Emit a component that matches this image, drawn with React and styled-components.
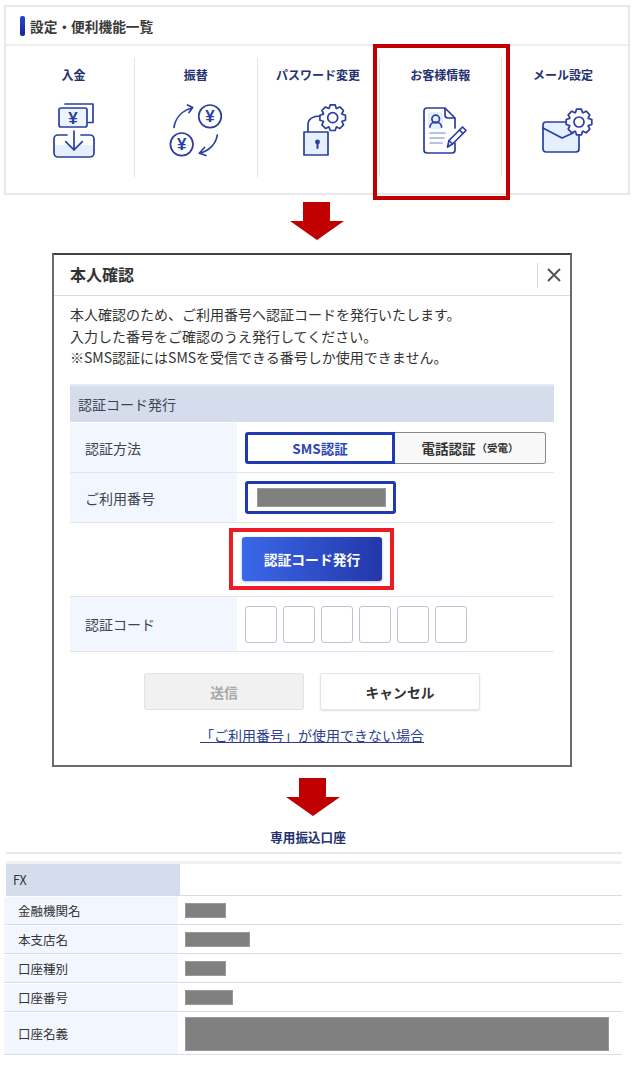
import styled, { createGlobalStyle } from "styled-components";

const NAVY = "#2a3f9f";
const LIGHT = "#e6effd";

const GlobalStyle = createGlobalStyle`
  html, body {
    margin: 0;
    padding: 0;
    background: #fff;
  }
  * {
    box-sizing: border-box;
  }
  body {
    font-family: "Noto Sans CJK JP", "Noto Sans", "Liberation Sans", sans-serif;
    color: #333;
  }
`;

const Page = styled.div`
  width: 634px;
  height: 1073px;
  overflow: hidden;
  padding-top: 5px;
  display: flex;
  flex-direction: column;
`;

const Panel = styled.section`
  width: 626px;
  margin-left: 4px;
  border: 2px solid #e8e8e8;
`;

const PanelHead = styled.div`
  height: 39px;
  display: flex;
  align-items: center;
  gap: 5px;
  padding-left: 14px;
  border-bottom: 2px solid #eeeeee;
`;

const HeadMark = styled.span`
  width: 5px;
  height: 20px;
  border-radius: 2px;
  background: linear-gradient(180deg, #2a45c8, #17269a);
`;

const HeadTitle = styled.h2`
  margin: 0;
  font-size: 13.7px;
  line-height: 18px;
  font-weight: 700;
  color: #3a3a3a;
`;

const MenuGrid = styled.div`
  display: grid;
  grid-template-columns: repeat(5, 122.25px);
  padding: 12px 0 16px 7px;
`;

const MenuItem = styled.div`
  position: relative;
  height: 119px;
  padding-top: 8px;
  display: flex;
  flex-direction: column;
  align-items: center;
  border-right: ${(p) => (p.$last ? "none" : "1px solid #e2e2e2")};

  ${(p) =>
    p.$marked &&
    `
    &::after {
      content: "";
      position: absolute;
      left: -7px;
      right: -9px;
      top: -14px;
      bottom: -23px;
      border: 4px solid #c00000;
    }
  `}
`;

const MenuLabel = styled.div`
  font-size: 12px;
  line-height: 18px;
  font-weight: 700;
  color: #25316f;
  white-space: nowrap;
`;

const MenuIcon = styled.svg`
  width: 60px;
  height: 70px;
  margin-top: 11px;
  fill: none;
  stroke: ${NAVY};
  stroke-width: 1.7;
  stroke-linecap: round;
  stroke-linejoin: round;
`;

const YenMark = styled.text`
  font-family: "Liberation Sans", sans-serif;
  font-size: 17px;
  font-weight: 700;
  fill: ${NAVY};
  stroke: none;
  text-anchor: middle;
`;

const ArrowSvg = styled.svg`
  display: block;
  flex: none;
  width: 54px;
  height: 38px;
  margin-top: ${(p) => p.$top}px;
  margin-left: ${(p) => p.$left}px;
`;

const Modal = styled.section`
  width: 520px;
  height: 514px;
  margin-top: 13px;
  margin-left: 52px;
  border: 2px solid #6a6a6a;
  border-top-color: #444;
  background: #fff;
`;

const ModalHead = styled.header`
  height: 41px;
  display: flex;
  align-items: center;
  justify-content: space-between;
  padding-left: 16px;
  border-bottom: 1px solid #dcdcdc;
`;

const ModalTitle = styled.h1`
  margin: 0;
  padding-bottom: 3px;
  font-size: 16px;
  font-weight: 700;
  color: #333;
`;

const CloseButton = styled.button`
  width: 33px;
  height: 25px;
  padding: 0;
  display: flex;
  align-items: center;
  justify-content: center;
  background: none;
  border: none;
  border-left: 1px solid #d4d4d4;
  color: #555;
`;

const ModalBody = styled.div`
  padding: 8px 16px 0;
`;

const Intro = styled.p`
  margin: 0 0 15.5px;
  font-size: 14px;
  line-height: 21.5px;
  color: #333;
  white-space: nowrap;
`;

const SectionHead = styled.div`
  height: 38px;
  margin-bottom: 1px;
  padding-left: 8px;
  display: flex;
  align-items: center;
  font-size: 14px;
  color: #3d4350;
  background: #d5ddec;
  border-top: 2px solid #e6ebf3;
`;

const FormRow = styled.div`
  display: grid;
  grid-template-columns: 167px 1fr;
  height: ${(p) => p.$h}px;
  border-bottom: 1px solid #dfe6f2;
`;

const FormLabel = styled.div`
  display: flex;
  align-items: center;
  padding-left: 15px;
  font-size: 14px;
  color: #3d4350;
  background: #f2f6fe;
`;

const FormValue = styled.div`
  display: flex;
  align-items: center;
  padding-left: 8px;
`;

const MethodButton = styled.div`
  width: ${(p) => (p.$active ? 150 : 151)}px;
  height: 32px;
  display: flex;
  align-items: center;
  justify-content: center;
  font-size: 13.5px;
  font-weight: 700;
  color: ${(p) => (p.$active ? "#2a45b8" : "#333")};
  background: ${(p) => (p.$active ? "#fff" : "#f8f8f8")};
  border: ${(p) => (p.$active ? "3px solid #2039b0" : "1px solid #8c8c8c")};
  border-left-width: ${(p) => (p.$active ? "3px" : "0")};
  border-radius: ${(p) => (p.$active ? "3px 0 0 3px" : "0 3px 3px 0")};
`;

const MethodNote = styled.span`
  font-size: 10.5px;
  margin-left: 1px;
`;

const NumberField = styled.div`
  width: 151px;
  height: 33px;
  display: flex;
  align-items: center;
  padding-left: 9px;
  border: 3px solid #2039b0;
  border-radius: 3px;
`;

const Masked = styled.div`
  width: ${(p) => p.$w}px;
  height: ${(p) => p.$h}px;
  background: #808080;
  border: 1px solid #999;
`;

const IssueRow = styled.div`
  height: 74px;
  padding-bottom: 1px;
  display: flex;
  align-items: center;
  justify-content: center;
  border-bottom: 1px solid #dfe6f2;
`;

const IssueWrap = styled.div`
  position: relative;

  &::after {
    content: "";
    position: absolute;
    inset: -9px -12px -9px -13px;
    border: 4px solid #ed1c24;
    pointer-events: none;
  }
`;

const IssueButton = styled.button`
  display: block;
  width: 140px;
  height: 44px;
  border: none;
  border-radius: 3px;
  font-family: inherit;
  font-size: 13.8px;
  font-weight: 700;
  color: #fff;
  background: linear-gradient(90deg, #3a68e8, #2437aa);
  box-shadow: 0 1px 3px rgba(40, 60, 170, 0.35);
`;

const CodeBoxes = styled.div`
  display: flex;
  gap: 6px;
`;

const CodeBox = styled.div`
  width: 32px;
  height: 37px;
  border: 1px solid #bcc4d2;
  border-radius: 3px;
  background: #fff;
`;

const Actions = styled.div`
  display: flex;
  justify-content: center;
  gap: 16px;
  margin-top: 21px;
`;

const ActionButton = styled.button`
  width: 160px;
  height: 37px;
  border: 1px solid ${(p) => (p.$disabled ? "#e2e2e2" : "#e4e4e4")};
  border-radius: 3px;
  font-family: inherit;
  font-size: 13.8px;
  font-weight: 700;
  color: ${(p) => (p.$disabled ? "#a8a8a8" : "#333")};
  background: ${(p) => (p.$disabled ? "#f1f1f1" : "#fff")};
  box-shadow: ${(p) => (p.$disabled ? "none" : "0 1px 2px rgba(0, 0, 0, 0.12)")};
`;

const HelpLink = styled.a`
  display: block;
  margin-top: 15px;
  text-align: center;
  font-size: 14px;
  line-height: 20px;
  color: #2d3d8f;
  text-decoration: underline;
`;

const AccountTitle = styled.h3`
  margin: 12px 0 0 6px;
  height: 26px;
  width: 616px;
  padding-right: 12px;
  text-align: center;
  font-size: 12.6px;
  line-height: 18px;
  font-weight: 700;
  color: #25316f;
  border-bottom: 2px solid #e8e8e8;
`;

const FxRow = styled.div`
  display: grid;
  grid-template-columns: 174px 1fr;
  width: 616px;
  height: 35px;
  margin-top: 7px;
  margin-left: 6px;
  border-top: 3px solid #eef1f6;
  border-bottom: 1px solid #d5ddec;
`;

const FxLabel = styled.div`
  display: flex;
  align-items: center;
  padding-left: 7px;
  font-size: 12.5px;
  color: #333;
  background: #d5ddec;
`;

const AccountRow = styled.div`
  display: grid;
  grid-template-columns: 174px 1fr;
  width: 618px;
  height: ${(p) => p.$h}px;
  margin-left: 4px;
  padding-top: 1px;
  border-bottom: 1px solid #d5ddec;
`;

const AccountLabel = styled.div`
  display: flex;
  align-items: center;
  padding-left: 14px;
  font-size: 12.5px;
  color: #333;
  background: #f2f6fe;
`;

const AccountValue = styled.div`
  display: flex;
  align-items: center;
  padding-left: 7px;
`;

// 8 tooth gear outline, used by the two settings icons
const gearPath = (cx, cy, outer, inner) => {
  const pts = [];
  for (let i = 0; i < 8; i++) {
    const a = (i * Math.PI) / 4;
    const step = Math.PI / 8;
    [
      [a - step * 0.95, inner],
      [a - step * 0.5, outer],
      [a + step * 0.5, outer],
      [a + step * 0.95, inner],
    ].forEach(([t, r]) => {
      pts.push(`${(cx + r * Math.cos(t)).toFixed(1)} ${(cy + r * Math.sin(t)).toFixed(1)}`);
    });
  }
  return `M${pts.join("L")}Z`;
};

const Gear = ({ cx, cy }) => (
  <>
    <path d={gearPath(cx, cy, 13, 10)} fill="#fff" />
    <circle cx={cx} cy={cy} r="5" />
  </>
);

const DepositIcon = () => (
  <MenuIcon viewBox="0 -5 60 70">
    <path d="M21 4H49V22.5H44.5" />
    <rect x="15" y="8" width="28" height="19" rx="2" fill="#eef4fe" />
    <YenMark x="29" y="23.5">¥</YenMark>
    <path d="M10 45H50V53a4 4 0 0 1-4 4H14a4 4 0 0 1-4-4Z" fill={LIGHT} stroke="none" />
    <path d="M23 35H14a4 4 0 0 0-4 4V53a4 4 0 0 0 4 4H46a4 4 0 0 0 4-4V39a4 4 0 0 0-4-4H37" />
    <path d="M30 31V50M21.7 41.7L30 50L38.3 41.7" />
  </MenuIcon>
);

const TransferIcon = () => (
  <MenuIcon viewBox="0 -5 60 70">
    <circle cx="44" cy="16.3" r="11.3" />
    <YenMark x="44" y="22.3">¥</YenMark>
    <circle cx="15.7" cy="44.3" r="11.3" />
    <YenMark x="15.7" y="50.3">¥</YenMark>
    <path d="M8 27.3C9.5 18 16 10.5 26.5 7.8M21.5 5L26.7 7.5L23 12.5" />
    <path d="M51.3 35C50 44 43 51 33.5 53.3M38.5 47.5L33.3 53.3L40 55.5" />
  </MenuIcon>
);

const PasswordIcon = () => (
  <MenuIcon viewBox="-7 0 60 70">
    <path d="M13 37V30C13 24 18 21 26 21" />
    <rect x="9" y="37" width="24" height="23" fill={LIGHT} />
    <circle cx="22.5" cy="47" r="1.6" fill={NAVY} />
    <path d="M22.5 48V53" strokeWidth="2" />
    <Gear cx={37.7} cy={22.7} />
  </MenuIcon>
);

const ProfileIcon = () => (
  <MenuIcon viewBox="-5 -5 60 70">
    <rect x="13" y="12" width="15" height="17" rx="3" fill={LIGHT} stroke="none" />
    <path d="M30 8H12a3 3 0 0 0-3 3V50a3 3 0 0 0 3 3H37a3 3 0 0 0 3-3V43M40 28V18L30 8V15a3 3 0 0 0 3 3H40" />
    <circle cx="20.7" cy="19" r="3.8" />
    <path d="M15 27C15 20.5 26.5 20.5 26.5 27" />
    <path d="M15 33H30M15 38H29M15 43H27" stroke="#9fb0dc" />
    <path d="M32.5 47L34 40.5L47.5 27L51 30.5L37.5 44Z" fill="#fff" />
    <path d="M44.5 30L48 33.5M34 40.5L37.5 44" />
  </MenuIcon>
);

const MailIcon = () => (
  <MenuIcon viewBox="-2 -5 60 70">
    <rect x="8" y="22" width="36" height="30" rx="3" fill={LIGHT} />
    <path d="M8 28L27 38L38 33" />
    <Gear cx={44} cy={22} />
  </MenuIcon>
);

const DownArrow = ({ top, left }) => (
  <ArrowSvg $top={top} $left={left} viewBox="0 0 54 38">
    <path d="M13 0H40V19H54L27 38L0 19H13Z" fill="#c00000" />
  </ArrowSvg>
);

const menus = [
  { label: "入金", Icon: DepositIcon },
  { label: "振替", Icon: TransferIcon },
  { label: "パスワード変更", Icon: PasswordIcon },
  { label: "お客様情報", Icon: ProfileIcon, marked: true },
  { label: "メール設定", Icon: MailIcon, last: true },
];

const accounts = [
  { label: "金融機関名", w: 41, h: 15 },
  { label: "本支店名", w: 65, h: 15 },
  { label: "口座種別", w: 41, h: 15 },
  { label: "口座番号", w: 48, h: 15 },
  { label: "口座名義", w: 424, h: 34, rowH: 43 },
];

const App = () => {
  return (
    <Page>
      <GlobalStyle />
      <Panel>
        <PanelHead>
          <HeadMark />
          <HeadTitle>設定・便利機能一覧</HeadTitle>
        </PanelHead>
        <MenuGrid>
          {menus.map(({ label, Icon, marked, last }) => (
            <MenuItem key={label} $marked={marked} $last={last}>
              <MenuLabel>{label}</MenuLabel>
              <Icon />
            </MenuItem>
          ))}
        </MenuGrid>
      </Panel>

      <DownArrow top={7} left={290} />

      <Modal>
        <ModalHead>
          <ModalTitle>本人確認</ModalTitle>
          <CloseButton aria-label="閉じる">
            <svg width="14" height="14" viewBox="0 0 14 14" stroke="#555" strokeWidth="2">
              <path d="M1 1L13 13M13 1L1 13" />
            </svg>
          </CloseButton>
        </ModalHead>
        <ModalBody>
          <Intro>
            本人確認のため、ご利用番号へ認証コードを発行いたします。
            <br />
            入力した番号をご確認のうえ発行してください。
            <br />
            ※SMS認証にはSMSを受信できる番号しか使用できません。
          </Intro>
          <SectionHead>認証コード発行</SectionHead>
          <FormRow $h={50}>
            <FormLabel>認証方法</FormLabel>
            <FormValue>
              <MethodButton $active>SMS認証</MethodButton>
              <MethodButton>
                電話認証<MethodNote>（受電）</MethodNote>
              </MethodButton>
            </FormValue>
          </FormRow>
          <FormRow $h={50}>
            <FormLabel>ご利用番号</FormLabel>
            <FormValue>
              <NumberField>
                <Masked $w={129} $h={19} />
              </NumberField>
            </FormValue>
          </FormRow>
          <IssueRow>
            <IssueWrap>
              <IssueButton>認証コード発行</IssueButton>
            </IssueWrap>
          </IssueRow>
          <FormRow $h={55}>
            <FormLabel>認証コード</FormLabel>
            <FormValue>
              <CodeBoxes>
                {[0, 1, 2, 3, 4, 5].map((n) => (
                  <CodeBox key={n} />
                ))}
              </CodeBoxes>
            </FormValue>
          </FormRow>
          <Actions>
            <ActionButton $disabled>送信</ActionButton>
            <ActionButton>キャンセル</ActionButton>
          </Actions>
          <HelpLink>「ご利用番号」が使用できない場合</HelpLink>
        </ModalBody>
      </Modal>

      <DownArrow top={11} left={286} />

      <AccountTitle>専用振込口座</AccountTitle>
      <FxRow>
        <FxLabel>FX</FxLabel>
      </FxRow>
      {accounts.map(({ label, w, h, rowH }) => (
        <AccountRow key={label} $h={rowH || 29}>
          <AccountLabel>{label}</AccountLabel>
          <AccountValue>
            <Masked $w={w} $h={h} />
          </AccountValue>
        </AccountRow>
      ))}
    </Page>
  );
};

export default App;
